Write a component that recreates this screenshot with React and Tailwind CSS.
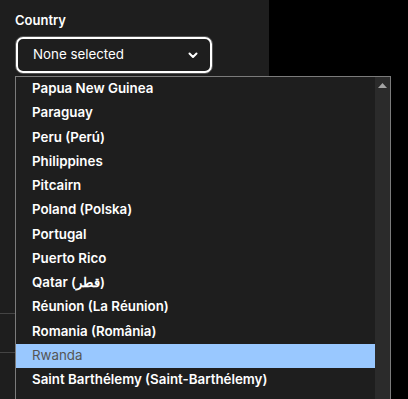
const COUNTRIES = [
  'Papua New Guinea',
  'Paraguay',
  'Peru (Perú)',
  'Philippines',
  'Pitcairn',
  'Poland (Polska)',
  'Portugal',
  'Puerto Rico',
  'Qatar (قطر)',
  'Réunion (La Réunion)',
  'Romania (România)',
  'Rwanda',
  'Saint Barthélemy (Saint-Barthélemy)',
];

const SELECTED = 'Rwanda';

const Chevron = () => (
  <svg className="w-[12px] h-[12px]" viewBox="0 0 24 24" fill="none" stroke="currentColor" strokeWidth={4} strokeLinecap="round" strokeLinejoin="round">
    <path d="M5 9l7 7 7-7" />
  </svg>
);

const CountryList = () => (
  <div className="absolute left-[15px] top-[76px] w-[376px] h-[340px] border border-[#7b7b7b] bg-[#1e1e1e] flex">
    <ul className="flex-1 flex flex-col">
      {COUNTRIES.map((name) => (
        <li
          key={name}
          className={
            name === SELECTED
              ? 'h-[24.25px] shrink-0 flex items-center pl-[16px] bg-[#99c8ff] text-[#555555] font-normal'
              : 'h-[24.25px] shrink-0 flex items-center pl-[16px] text-white font-semibold'
          }
        >
          {name}
        </li>
      ))}
    </ul>
    <div className="w-[15px] bg-[#2b2b2b] flex justify-center pt-[6px]">
      <svg className="w-[9px] h-[5px]" viewBox="0 0 9 5">
        <polygon points="4.5,0 9,5 0,5" fill="#a3a3a3" />
      </svg>
    </div>
  </div>
);

export default function App() {
  return (
    <div
      className="relative w-[408px] h-[399px] bg-black overflow-hidden flex text-[13.33px]"
      style={{ fontFamily: 'Inter, "Noto Sans", sans-serif' }}
    >
      <div className="w-[269px] h-full bg-[#1e1e1e] flex flex-col">
        <div className="px-[15px] pt-[11px]">
          <label className="block text-white font-semibold text-[13px] leading-[18px]">Country</label>
          <div className="mt-[7px] w-[198px] h-[38px] rounded-[8px] border border-[#555]">
            <div className="w-full h-full rounded-[7px] border-2 border-white flex items-center justify-between pl-[15px] pr-[11px] text-white text-[13.33px]">
              <span>None selected</span>
              <Chevron />
            </div>
          </div>
        </div>
        <div className="h-[239px] shrink-0" />
        <div className="h-[39px] border-t border-[#444]" />
        <div className="border-t border-[#444]" />
      </div>
      <CountryList />
    </div>
  );
}
